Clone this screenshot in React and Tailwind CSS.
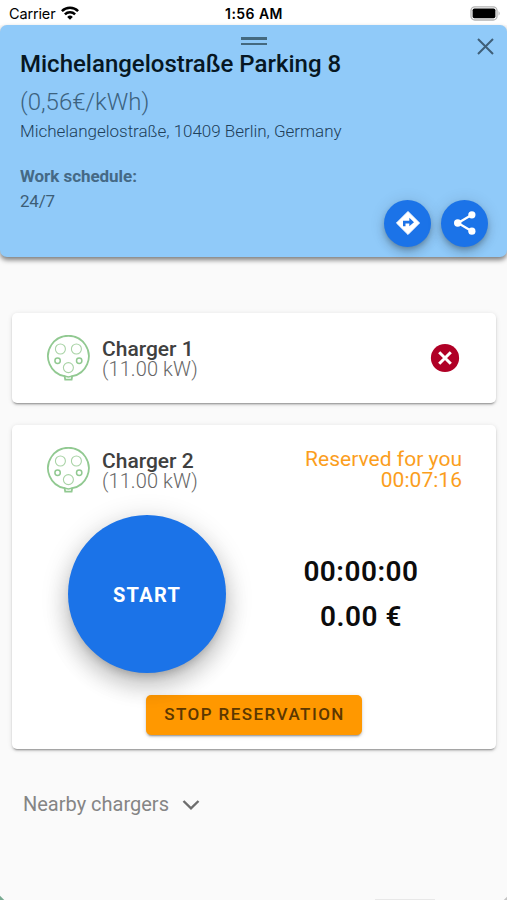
import React from "react";

function StatusBar() {
  return (
    <div className="grid h-[25px] grid-cols-3 items-center bg-white font-['Inter'] text-black">
      <div className="flex items-center gap-[6px] pl-[9px] pt-[3px]">
        <span className="text-[14.5px] leading-[16px] tracking-[-0.15px]">Carrier</span>
        <svg width="18" height="14" viewBox="0 0 18 14" className="-mt-[3px]">
          <g fill="none" stroke="#000" strokeWidth="2.5">
            <path d="M0.9 5.1a11.5 11.5 0 0 1 16.2 0" />
            <path d="M3.9 8.3a7.2 7.2 0 0 1 10.2 0" />
          </g>
          <path d="M9 13.8L6.2 10.9a4 4 0 0 1 5.6 0z" />
        </svg>
      </div>
      <div className="pl-[1px] pt-[3px] text-center text-[14px] font-semibold leading-[16px] tracking-[0.45px]">1:56 AM</div>
      <svg width="31" height="15" viewBox="0 0 31 15" className="mr-[6px] mt-[1px] justify-self-end">
        <rect x="1" y="0.8" width="26" height="13.2" rx="3.8" fill="#fff" stroke="#b3b3b3" strokeWidth="1.3" />
        <rect x="2.6" y="2.5" width="22.8" height="9.8" rx="1.8" />
        <path d="M28.6 5q2 2.4 0 4.8z" fill="#aaa" />
      </svg>
    </div>
  );
}

function RoundButton({ children }) {
  return (
    <button className="flex size-[47px] items-center justify-center rounded-full bg-[#1b73e8] shadow-[0_3px_5px_-1px_rgba(0,0,0,0.2),0_6px_10px_rgba(0,0,0,0.14),0_1px_16px_rgba(0,0,0,0.12)]">
      {children}
    </button>
  );
}

function PlugIcon() {
  return (
    <svg width="44" height="47" viewBox="0 0 44 47" fill="none" stroke="#91c991">
      <path d="M18.6 41.2A20.4 20.4 0 1 1 26.2 41.2L25.6 44.7H19.2Z" strokeWidth="1.8" />
      <path d="M18 41L22.4 42L26.8 41" strokeWidth="1.5" />
      <g strokeWidth="1.1" stroke="#a9d3a6">
        <circle cx="14.4" cy="14" r="5" />
        <circle cx="30.4" cy="14" r="5" />
        <circle cx="22.4" cy="32.6" r="5" />
      </g>
      <g strokeWidth="1.5">
        <circle cx="11.6" cy="25.7" r="2.7" />
        <circle cx="33.2" cy="25.7" r="2.7" />
      </g>
    </svg>
  );
}

function ChargerHeader({ name, children }) {
  return (
    <div className="flex h-[47px] items-center">
      <PlugIcon />
      <div className="ml-[12px] flex-1 leading-[20px]">
        <div className="text-[21px] font-medium leading-[20px] text-[#404040]">{name}</div>
        <div className="text-[20px] font-light leading-[20px] tracking-[0.1px] text-[#666]">(11.00 kW)</div>
      </div>
      {children}
    </div>
  );
}

const cardShadow =
  "rounded-[5px] bg-white shadow-[0_3px_1px_-2px_rgba(0,0,0,0.2),0_2px_2px_rgba(0,0,0,0.14),0_1px_5px_rgba(0,0,0,0.12)]";

export default function App() {
  return (
    <div className="relative h-[900px] w-[507px] overflow-hidden bg-[#fafafa] font-['Roboto',sans-serif]">
      <StatusBar />
      <header className="relative flex h-[232px] flex-col rounded-[7px] bg-[#90caf9] pl-[20px] shadow-[0_3px_5px_rgba(0,0,0,0.5)]">
        <h1 className="mt-[25px] text-[24px] font-medium leading-[28px] text-[#071723]">Michelangelostraße Parking 8</h1>
        <p className="mt-[10px] text-[24px] font-light leading-[28px] text-[#3c627f]">(0,56€/kWh)</p>
        <p className="mt-[5px] text-[17px] font-light leading-[20px] tracking-[-0.02px] text-[#20405a]">Michelangelostraße, 10409 Berlin, Germany</p>
        <p className="mt-[25px] text-[17px] font-bold leading-[20px] tracking-[-0.05px] text-[#456985]">Work schedule:</p>
        <p className="mt-[5px] text-[17px] leading-[20px] tracking-[-0.2px] text-[#3c5d76]">24/7</p>
        <div className="absolute left-[241px] top-[12px] flex w-[26px] flex-col gap-[3px]">
          <div className="h-[2.5px] bg-[#44697f]" />
          <div className="h-[2.5px] bg-[#44697f]" />
        </div>
        <svg className="absolute left-[477px] top-[13px]" width="17" height="17" viewBox="0 0 17 17" stroke="#3f5f78" strokeWidth="2">
          <path d="M1 1L16 16M16 1L1 16" />
        </svg>
        <div className="absolute right-[19px] top-[174.5px] flex gap-[10px]">
          <RoundButton>
            <svg width="24" height="24" viewBox="0 0 24 24">
              <path d="M12 0.4L23.6 12L12 23.6L0.4 12Z" fill="#fff" stroke="#fff" strokeWidth="0.8" strokeLinejoin="round" />
              <path d="M7 15.2V9.8H13.3V6.8L18 11.2L13.3 15.2V12.4H9.5V15.2Z" fill="#1b73e8" />
            </svg>
          </RoundButton>
          <RoundButton>
            <svg width="24" height="26" viewBox="0 0 24 26" fill="#fff">
              <path d="M18.9 4.8L5 13L18.9 21.2" fill="none" stroke="#fff" strokeWidth="2.2" />
              <circle cx="18.9" cy="4.8" r="3.6" />
              <circle cx="4.7" cy="13" r="3.7" />
              <circle cx="18.9" cy="21.2" r="3.6" />
            </svg>
          </RoundButton>
        </div>
      </header>

      <main className="ml-[12px] mr-[11.5px] mt-[56px]">
        <section className={`h-[90px] pl-[34px] pr-[35.5px] pt-[22px] ${cardShadow}`}>
          <ChargerHeader name="Charger 1">
            <svg className="-mt-[1px]" width="30" height="30" viewBox="0 0 30 30">
              <circle cx="15" cy="15" r="14.1" fill="#b00026" />
              <path d="M9.2 9.2L20.8 20.8M20.8 9.2L9.2 20.8" stroke="#fff" strokeWidth="3" />
            </svg>
          </ChargerHeader>
        </section>

        <section className={`mt-[22px] h-[324px] pl-[34px] pr-[33.5px] pt-[22px] ${cardShadow}`}>
          <ChargerHeader name="Charger 2">
            <div className="-mt-[1px] text-right text-[21px] leading-[21px] tracking-[0.03px] text-[#fb9e1d]">
              <div>Reserved for you</div>
              <div>00:07:16</div>
            </div>
          </ChargerHeader>
          <div className="mt-[21px] flex items-center">
            <button className="ml-[22px] size-[158px] rounded-full bg-[#1b73e8] pt-[1px] text-[20px] font-bold tracking-[1.3px] text-white shadow-[0_7px_9px_-4px_rgba(0,0,0,0.2),0_14px_21px_2px_rgba(0,0,0,0.14),0_5px_26px_4px_rgba(0,0,0,0.12)]">
              START
            </button>
            <div className="ml-[55px] w-[160px] text-center text-[28px] font-semibold leading-[45px] tracking-[0.5px] text-[#0c0c0c]">
              <div>00:00:00</div>
              <div>0.00 €</div>
            </div>
          </div>
          <button className="ml-[100px] mt-[22px] block h-[40px] w-[216px] rounded-[5px] bg-[#ff9800] pl-[1px] text-[17px] font-medium tracking-[1.45px] text-[#5c3700] shadow-[0_3px_1px_-2px_rgba(0,0,0,0.2),0_2px_2px_rgba(0,0,0,0.14),0_1px_5px_rgba(0,0,0,0.12)]">
            STOP RESERVATION
          </button>
        </section>
      </main>

      <button className="ml-[23px] mt-[43px] flex items-center text-[20px] leading-[24px] text-[#858585]">
        <span>Nearby chargers</span>
        <svg className="ml-[13px] mt-[2px]" width="18" height="12" viewBox="0 0 18 12" fill="none" stroke="#6d6d6d" strokeWidth="2.4">
          <path d="M1.5 2L9 9.3L16.5 2" />
        </svg>
      </button>
      <div className="absolute -left-[3px] top-[897px] size-[6px] rotate-45 bg-[#78aa91]" />
      <div className="absolute left-[504px] top-[898px] size-[6px] rotate-45 bg-[#c4c4c4]" />
      <div className="absolute left-[375px] top-[899px] h-px w-[60px] bg-[#e8e8e8]" />
    </div>
  );
}
